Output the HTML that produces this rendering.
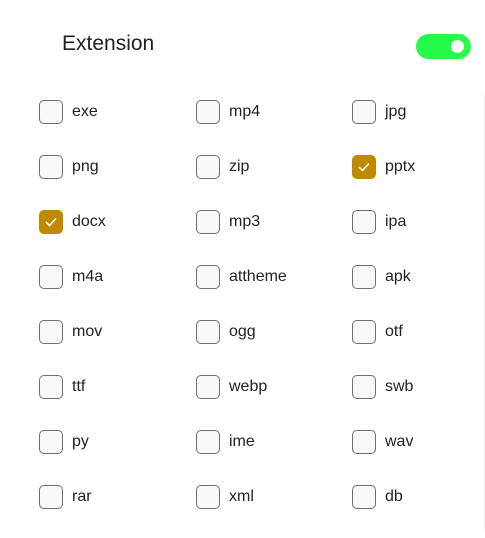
<!DOCTYPE html><html><head><style>
body{margin:0;width:485px;height:538px;background:#fff;position:relative;overflow:hidden;font-family:"Liberation Sans",sans-serif;color:#222}
.t{position:absolute;left:62px;top:32px;font-size:21px}
.tg{position:absolute;left:416px;top:34px;width:55px;height:25px;border-radius:13px;background:#25fb4b}
.tg:after{content:"";position:absolute;left:35px;top:6px;width:13px;height:13px;border-radius:50%;background:#fff}
.line{position:absolute;left:484px;top:95px;width:1px;height:435px;background:#efefef}
.i{position:absolute;height:24px;display:flex;align-items:center;font-size:16px}
.b{width:22px;height:22px;border:1px solid #6f6f6f;border-radius:5px;background:#f9f9f9;margin-right:9px;position:relative}
.c{background:#bf8a00;border-color:#bf8a00}
.c svg{position:absolute;left:5px;top:6px}
</style></head><body>
<div class="t">Extension</div><div class="tg"></div><div class="line"></div>
<div id="g"></div>
<script>
var n=[["exe","mp4","jpg"],["png","zip","pptx"],["docx","mp3","ipa"],["m4a","attheme","apk"],["mov","ogg","otf"],["ttf","webp","swb"],["py","ime","wav"],["rar","xml","db"]];
var x=[39,196,352],h="";
n.forEach(function(r,i){r.forEach(function(s,j){var c=(s=="pptx"||s=="docx");
h+='<div class="i" style="left:'+x[j]+'px;top:'+(100+i*55)+'px"><div class="b'+(c?' c':'')+'">'+(c?'<svg width="12" height="10" viewBox="0 0 12 10"><path d="M1 5l3.5 3.5L11 1.5" fill="none" stroke="#fff" stroke-width="1.5"/></svg>':'')+'</div>'+s+'</div>';});});
document.getElementById("g").innerHTML=h;
</script>
</body></html>
